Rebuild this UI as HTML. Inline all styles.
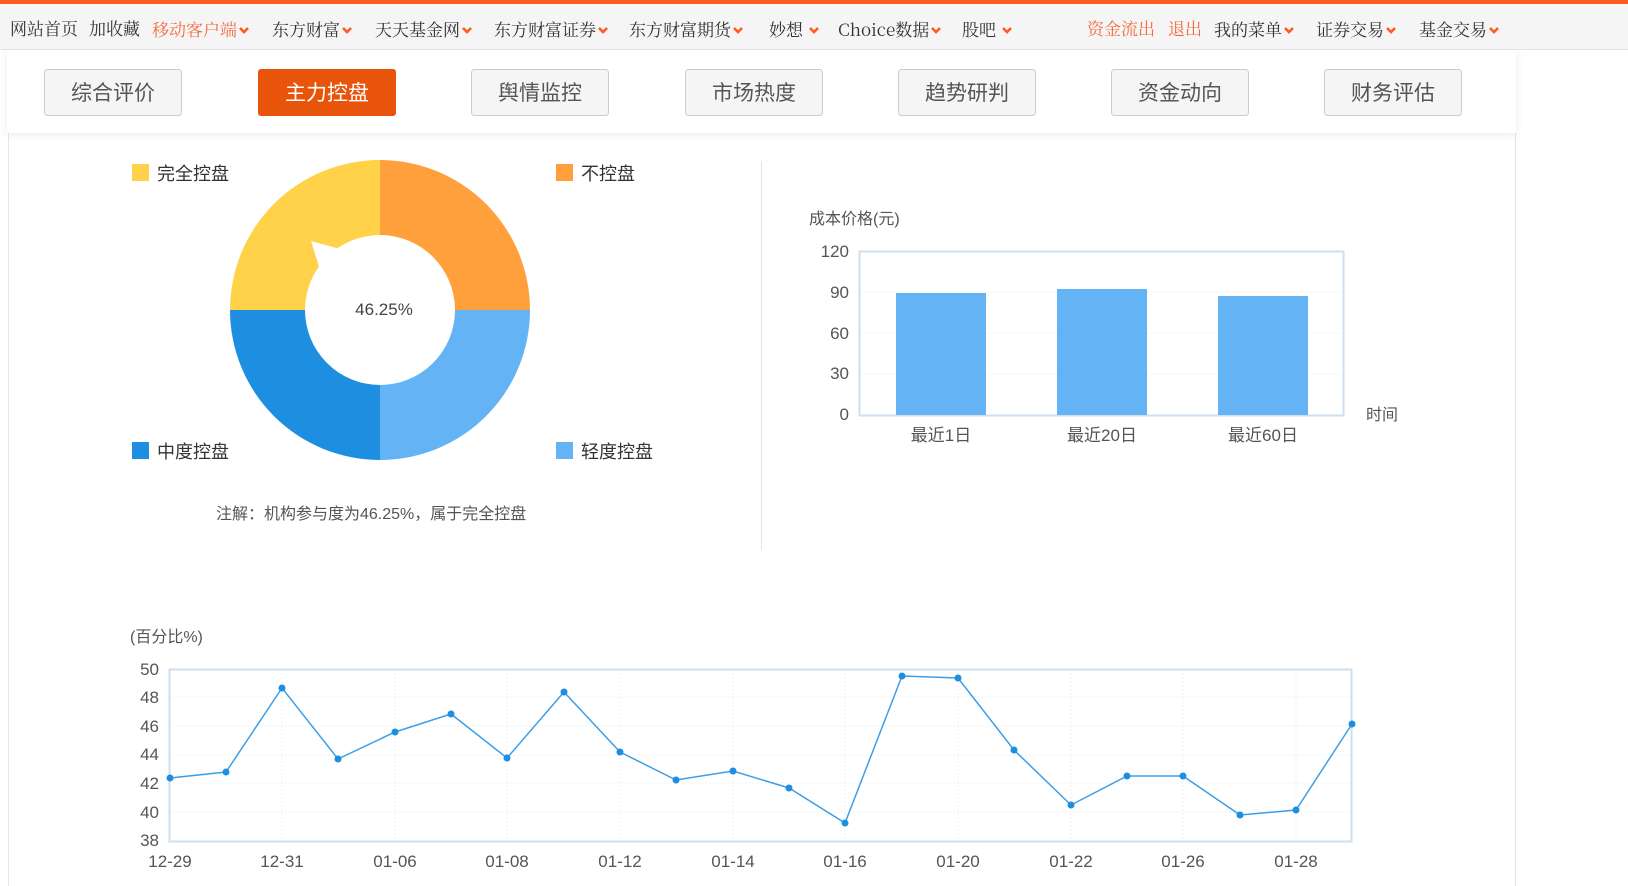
<!DOCTYPE html>
<html><head><meta charset="utf-8"><style>
html,body{margin:0;padding:0;width:1628px;height:886px;overflow:hidden;background:#fff}
.nav{position:absolute;left:0;top:0;width:1628px;height:50px;background:#f5f5f5;border-top:4px solid #ff5a1f;box-sizing:border-box;border-bottom:1px solid #e4e4e4}
.nav span{position:absolute;top:11px;font:17px "Noto Serif CJK SC","Liberation Serif",serif;color:#333;white-space:nowrap}
.nav .o{color:#f26a3c}
.nav b{display:inline-block;width:12px;height:10px;margin-left:1px;vertical-align:1px}
.nav b svg{position:static}
svg{position:absolute;left:0;top:0}
text{font-family:"Liberation Sans","Noto Sans CJK SC",sans-serif}
</style></head><body>
<svg width="1628" height="886" viewBox="0 0 1628 886">
<defs><filter id="sh" x="-5%" y="-50%" width="110%" height="200%"><feDropShadow dx="0" dy="2" stdDeviation="4" flood-color="#000" flood-opacity="0.08"/></filter></defs>
<line x1="8.5" y1="133" x2="8.5" y2="886" stroke="#dde6ee"/>
<line x1="1515.5" y1="133" x2="1515.5" y2="886" stroke="#dde6ee"/>
<rect x="7" y="50" width="1509" height="83" fill="#fff" filter="url(#sh)"/>
<g font-size="21" text-anchor="middle">
<rect x="44.5" y="69.5" width="137" height="46" rx="3" fill="#f5f5f5" stroke="#ccc"/><text x="113" y="100" fill="#555">综合评价</text>
<rect x="258" y="69" width="138" height="47" rx="3" fill="#e8540a"/><text x="327" y="100" fill="#fff">主力控盘</text>
<rect x="471.5" y="69.5" width="137" height="46" rx="3" fill="#f5f5f5" stroke="#ccc"/><text x="540" y="100" fill="#555">舆情监控</text>
<rect x="685.5" y="69.5" width="137" height="46" rx="3" fill="#f5f5f5" stroke="#ccc"/><text x="754" y="100" fill="#555">市场热度</text>
<rect x="898.5" y="69.5" width="137" height="46" rx="3" fill="#f5f5f5" stroke="#ccc"/><text x="967" y="100" fill="#555">趋势研判</text>
<rect x="1111.5" y="69.5" width="137" height="46" rx="3" fill="#f5f5f5" stroke="#ccc"/><text x="1180" y="100" fill="#555">资金动向</text>
<rect x="1324.5" y="69.5" width="137" height="46" rx="3" fill="#f5f5f5" stroke="#ccc"/><text x="1393" y="100" fill="#555">财务评估</text>
</g>
<path d="M380 310 L380 160 A150 150 0 0 1 530 310 Z" fill="#ffa03c"/>
<path d="M380 310 L530 310 A150 150 0 0 1 380 460 Z" fill="#63b3f5"/>
<path d="M380 310 L380 460 A150 150 0 0 1 230 310 Z" fill="#1e8fe0"/>
<path d="M380 310 L230 310 A150 150 0 0 1 380 160 Z" fill="#ffd24a"/>
<circle cx="380" cy="310" r="75" fill="#fff"/>
<path d="M311 241 L340 249 L320 270 Z" fill="#fff"/>
<text x="384" y="315" font-size="17" fill="#444" text-anchor="middle">46.25%</text>
<g font-size="18" fill="#333">
<rect x="132" y="164" width="17" height="17" fill="#ffd24a"/><text x="157" y="180">完全控盘</text>
<rect x="556" y="164" width="17" height="17" fill="#ffa03c"/><text x="581" y="180">不控盘</text>
<rect x="132" y="442" width="17" height="17" fill="#1e8fe0"/><text x="157" y="458">中度控盘</text>
<rect x="556" y="442" width="17" height="17" fill="#63b3f5"/><text x="581" y="458">轻度控盘</text>
</g>
<text x="216" y="519" font-size="16" fill="#555">注解：机构参与度为46.25%，属于完全控盘</text>
<line x1="761.5" y1="161" x2="761.5" y2="550" stroke="#dde6ee"/>
<text x="809" y="224" font-size="16" fill="#555">成本价格(元)</text>
<g stroke="#eef1f5" stroke-dasharray="2,2"><line x1="859" y1="292" x2="1343" y2="292"/><line x1="859" y1="333" x2="1343" y2="333"/><line x1="859" y1="374" x2="1343" y2="374"/></g>
<rect x="859.5" y="251.5" width="484" height="164" fill="none" stroke="#cfdfee" stroke-width="2"/>
<g font-size="17" fill="#555" text-anchor="end"><text x="849" y="257">120</text><text x="849" y="298">90</text><text x="849" y="339">60</text><text x="849" y="379">30</text><text x="849" y="420">0</text></g>
<rect x="896" y="293" width="90" height="122" fill="#63b3f5"/>
<rect x="1057" y="289" width="90" height="126" fill="#63b3f5"/>
<rect x="1218" y="296" width="90" height="119" fill="#63b3f5"/>
<g font-size="17" fill="#555" text-anchor="middle"><text x="941" y="441">最近1日</text><text x="1102" y="441">最近20日</text><text x="1263" y="441">最近60日</text></g>
<text x="1366" y="420" font-size="16" fill="#555">时间</text>
<text x="130" y="642" font-size="16" fill="#555">(百分比%)</text>
<g stroke="#eef1f5" stroke-dasharray="2,2">
<line x1="169" y1="697" x2="1351" y2="697"/><line x1="169" y1="726" x2="1351" y2="726"/><line x1="169" y1="755" x2="1351" y2="755"/><line x1="169" y1="783" x2="1351" y2="783"/><line x1="169" y1="812" x2="1351" y2="812"/>
<line x1="282" y1="669" x2="282" y2="841"/><line x1="395" y1="669" x2="395" y2="841"/><line x1="507" y1="669" x2="507" y2="841"/><line x1="620" y1="669" x2="620" y2="841"/><line x1="733" y1="669" x2="733" y2="841"/><line x1="845" y1="669" x2="845" y2="841"/><line x1="958" y1="669" x2="958" y2="841"/><line x1="1071" y1="669" x2="1071" y2="841"/><line x1="1183" y1="669" x2="1183" y2="841"/><line x1="1296" y1="669" x2="1296" y2="841"/>
</g>
<rect x="169.5" y="669.5" width="1182" height="172" fill="none" stroke="#cfdfee" stroke-width="2"/>
<g font-size="17" fill="#555" text-anchor="end"><text x="159" y="675">50</text><text x="159" y="703">48</text><text x="159" y="732">46</text><text x="159" y="760">44</text><text x="159" y="789">42</text><text x="159" y="818">40</text><text x="159" y="846">38</text></g>
<g font-size="17" fill="#555" text-anchor="middle"><text x="170" y="867">12-29</text><text x="282" y="867">12-31</text><text x="395" y="867">01-06</text><text x="507" y="867">01-08</text><text x="620" y="867">01-12</text><text x="733" y="867">01-14</text><text x="845" y="867">01-16</text><text x="958" y="867">01-20</text><text x="1071" y="867">01-22</text><text x="1183" y="867">01-26</text><text x="1296" y="867">01-28</text></g>
<polyline fill="none" stroke="#3d9ee8" stroke-width="1.5" points="170,778 226,772 282,688 338,759 395,732 451,714 507,758 564,692 620,752 676,780 733,771 789,788 845,823 902,676 958,678 1014,750 1071,805 1127,776 1183,776 1240,815 1296,810 1352,724"/>
<g fill="#1e8fe0"><circle cx="170" cy="778" r="3.5"/><circle cx="226" cy="772" r="3.5"/><circle cx="282" cy="688" r="3.5"/><circle cx="338" cy="759" r="3.5"/><circle cx="395" cy="732" r="3.5"/><circle cx="451" cy="714" r="3.5"/><circle cx="507" cy="758" r="3.5"/><circle cx="564" cy="692" r="3.5"/><circle cx="620" cy="752" r="3.5"/><circle cx="676" cy="780" r="3.5"/><circle cx="733" cy="771" r="3.5"/><circle cx="789" cy="788" r="3.5"/><circle cx="845" cy="823" r="3.5"/><circle cx="902" cy="676" r="3.5"/><circle cx="958" cy="678" r="3.5"/><circle cx="1014" cy="750" r="3.5"/><circle cx="1071" cy="805" r="3.5"/><circle cx="1127" cy="776" r="3.5"/><circle cx="1183" cy="776" r="3.5"/><circle cx="1240" cy="815" r="3.5"/><circle cx="1296" cy="810" r="3.5"/><circle cx="1352" cy="724" r="3.5"/></g>
</svg>
<div class="nav">
<span style="left:10px">网站首页</span>
<span style="left:89px">加收藏</span>
<span style="left:152px" class="o">移动客户端<b><svg width="12" height="10"><path d="M2 3 L6 7 L10 3" fill="none" stroke="#ff5a1f" stroke-width="2.6"/></svg></b></span>
<span style="left:272px">东方财富<b><svg width="12" height="10"><path d="M2 3 L6 7 L10 3" fill="none" stroke="#ff5a1f" stroke-width="2.6"/></svg></b></span>
<span style="left:375px">天天基金网<b><svg width="12" height="10"><path d="M2 3 L6 7 L10 3" fill="none" stroke="#ff5a1f" stroke-width="2.6"/></svg></b></span>
<span style="left:494px">东方财富证券<b><svg width="12" height="10"><path d="M2 3 L6 7 L10 3" fill="none" stroke="#ff5a1f" stroke-width="2.6"/></svg></b></span>
<span style="left:629px">东方财富期货<b><svg width="12" height="10"><path d="M2 3 L6 7 L10 3" fill="none" stroke="#ff5a1f" stroke-width="2.6"/></svg></b></span>
<span style="left:769px">妙想 <b><svg width="12" height="10"><path d="M2 3 L6 7 L10 3" fill="none" stroke="#ff5a1f" stroke-width="2.6"/></svg></b></span>
<span style="left:838px">Choice数据<b><svg width="12" height="10"><path d="M2 3 L6 7 L10 3" fill="none" stroke="#ff5a1f" stroke-width="2.6"/></svg></b></span>
<span style="left:962px">股吧 <b><svg width="12" height="10"><path d="M2 3 L6 7 L10 3" fill="none" stroke="#ff5a1f" stroke-width="2.6"/></svg></b></span>
<span style="left:1087px" class="o">资金流出</span>
<span style="left:1168px" class="o">退出</span>
<span style="left:1214px">我的菜单<b><svg width="12" height="10"><path d="M2 3 L6 7 L10 3" fill="none" stroke="#ff5a1f" stroke-width="2.6"/></svg></b></span>
<span style="left:1316px">证券交易<b><svg width="12" height="10"><path d="M2 3 L6 7 L10 3" fill="none" stroke="#ff5a1f" stroke-width="2.6"/></svg></b></span>
<span style="left:1419px">基金交易<b><svg width="12" height="10"><path d="M2 3 L6 7 L10 3" fill="none" stroke="#ff5a1f" stroke-width="2.6"/></svg></b></span>
</div>
</body></html>
